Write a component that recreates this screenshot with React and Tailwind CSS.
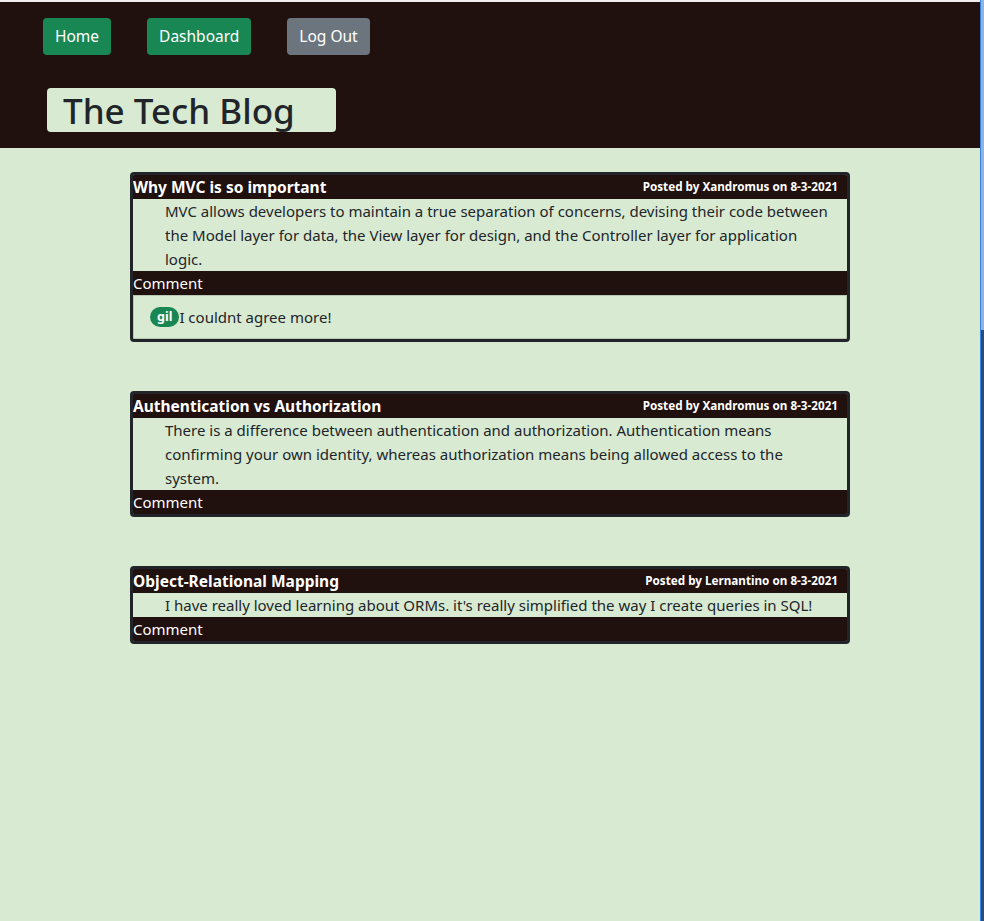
import React from 'react';

const posts = [
    {
        id: 1,
        title: 'Why MVC is so important',
        author: 'Xandromus',
        date: '8-3-2021',
        body: 'MVC allows developers to maintain a true separation of concerns, devising their code between the Model layer for data, the View layer for design, and the Controller layer for application logic.',
        comments: [{ user: 'gil', text: 'I couldnt agree more!' }],
    },
    {
        id: 2,
        title: 'Authentication vs Authorization',
        author: 'Xandromus',
        date: '8-3-2021',
        body: 'There is a difference between authentication and authorization. Authentication means confirming your own identity, whereas authorization means being allowed access to the system.',
        comments: [],
    },
    {
        id: 3,
        title: 'Object-Relational Mapping',
        author: 'Lernantino',
        date: '8-3-2021',
        body: "I have really loved learning about ORMs. it's really simplified the way I create queries in SQL!",
        comments: [],
    },
];

const PostCard = ({ post }) => (
    <div className="border-[3px] border-[#212529] rounded-[4px] overflow-hidden">
        {/* Title row */}
        <div className="flex justify-between items-start h-6 bg-[#20100e] text-white">
            <h2 className="text-[15.5px] leading-6 font-bold">{post.title}</h2>
            <span className="text-[11.7px] font-bold pt-[3px] pr-[9px]">
                Posted by {post.author} on {post.date}
            </span>
        </div>

        {/* Body */}
        <p className="pl-8 pr-3 text-[15px] leading-6 text-[#212529]">{post.body}</p>

        {/* Comment bar */}
        <div className="h-6 bg-[#20100e] text-white text-[15px] leading-6">Comment</div>

        {post.comments.map((c, i) => (
            <div key={i} className="flex items-center h-[44px] pl-4 border border-black/15 text-[#212529]">
                <span className="inline-flex items-center h-5 px-[7px] rounded-full bg-[#198754] text-white text-[12.5px] font-bold">
                    {c.user}
                </span>
                <span className="text-[15px] leading-6">{c.text}</span>
            </div>
        ))}
    </div>
);

export default function App() {
    return (
        <div className="flex min-h-[921px] font-['Noto_Sans',sans-serif]">
            <div className="w-[980px] bg-[#d9ead3] flex flex-col">
                <div className="h-[2px] bg-[#eeeeee]"></div>

                {/* Header */}
                <header className="h-[146px] bg-[#20100e] pl-[43px] pt-4">
                    <nav className="flex gap-9">
                        <button className="h-[37px] px-3 rounded-[4px] bg-[#198754] text-white text-[15.5px]">Home</button>
                        <button className="h-[37px] px-3 rounded-[4px] bg-[#198754] text-white text-[15.5px]">Dashboard</button>
                        <button className="h-[37px] px-3 rounded-[4px] bg-[#6c757d] text-white text-[15.5px]">Log Out</button>
                    </nav>
                    <div className="mt-[33px] ml-1 w-[289px] h-[44px] rounded-[4px] bg-[#d9ead3]">
                        <h1 className="pl-4 text-[35px] leading-[45px] font-medium text-[#212529]">The Tech Blog</h1>
                    </div>
                </header>

                {/* Posts */}
                <main className="w-[720px] mx-auto mt-6 flex flex-col gap-[49px]">
                    {posts.map((post) => (
                        <PostCard key={post.id} post={post} />
                    ))}
                </main>
            </div>

            {/* Window edge */}
            <div className="w-[4px] flex flex-col border-l border-[#3b82e0]">
                <div className="h-[330px] bg-[#8fb4e0]"></div>
                <div className="flex-1 bg-[#2a4e78]"></div>
            </div>
        </div>
    );
}
